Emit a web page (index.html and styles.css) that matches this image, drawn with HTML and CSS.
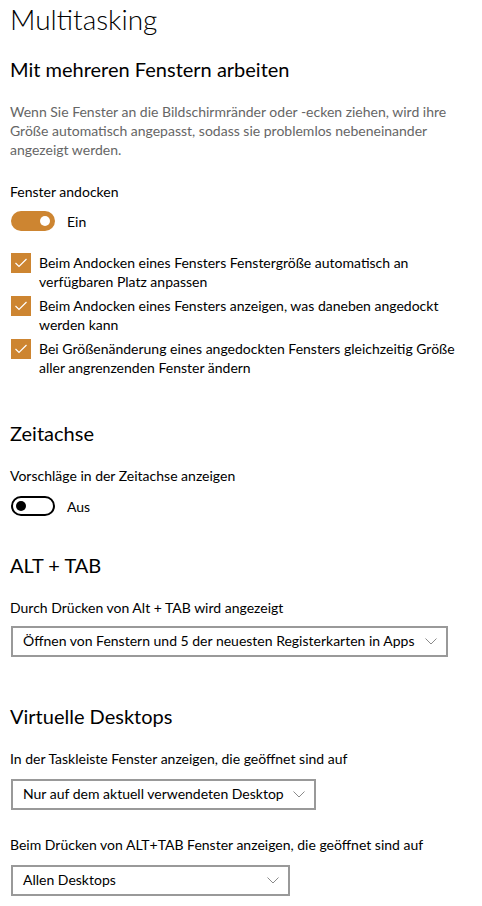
FILE: index.html
```html
<!DOCTYPE html>
<html lang="de">
<head>
    <meta charset="UTF-8">
    <meta name="viewport" content="width=device-width, initial-scale=1.0">
    <title>Multitasking</title>
    <link rel="stylesheet" href="styles.css">
</head>
<body>
    <div class="page">
        <h1 class="page-title">Multitasking</h1>

        <!-- Fenster andocken -->
        <section class="section snap">
            <h2 class="section-title">Mit mehreren Fenstern arbeiten</h2>
            <p class="description">Wenn Sie Fenster an die Bildschirmränder oder -ecken ziehen, wird ihre Größe automatisch angepasst, sodass sie problemlos nebeneinander angezeigt werden.</p>
            <div class="label snap-label">Fenster andocken</div>
            <div class="toggle-row">
                <span class="toggle on"><span class="knob"></span></span>
                <span class="toggle-text">Ein</span>
            </div>
            <ul class="checks">
                <li class="check">
                    <span class="box">
                        <svg width="20" height="20" viewBox="0 0 20 20"><polyline points="4.5,10 8,13.5 15.5,6" fill="none" stroke="#fff" stroke-width="1.2"/></svg>
                    </span>
                    <span class="check-text">Beim Andocken eines Fensters Fenstergröße automatisch an verfügbaren Platz anpassen</span>
                </li>
                <li class="check">
                    <span class="box">
                        <svg width="20" height="20" viewBox="0 0 20 20"><polyline points="4.5,10 8,13.5 15.5,6" fill="none" stroke="#fff" stroke-width="1.2"/></svg>
                    </span>
                    <span class="check-text">Beim Andocken eines Fensters anzeigen, was daneben angedockt werden kann</span>
                </li>
                <li class="check">
                    <span class="box">
                        <svg width="20" height="20" viewBox="0 0 20 20"><polyline points="4.5,10 8,13.5 15.5,6" fill="none" stroke="#fff" stroke-width="1.2"/></svg>
                    </span>
                    <span class="check-text">Bei Größenänderung eines angedockten Fensters gleichzeitig Größe aller angrenzenden Fenster ändern</span>
                </li>
            </ul>
        </section>

        <!-- Zeitachse -->
        <section class="section timeline">
            <h2 class="section-title">Zeitachse</h2>
            <div class="label">Vorschläge in der Zeitachse anzeigen</div>
            <div class="toggle-row">
                <span class="toggle off"><span class="knob"></span></span>
                <span class="toggle-text">Aus</span>
            </div>
        </section>

        <!-- ALT + TAB -->
        <section class="section alttab">
            <h2 class="section-title">ALT + TAB</h2>
            <div class="label">Durch Drücken von Alt + TAB wird angezeigt</div>
            <div class="dropdown wide">
                <span class="dropdown-text">Öffnen von Fenstern und 5 der neuesten Registerkarten in Apps</span>
                <svg class="chevron" width="12" height="7" viewBox="0 0 12 7"><polyline points="0.5,0.5 6,6 11.5,0.5" fill="none" stroke="#8a8a8a" stroke-width="1"/></svg>
            </div>
        </section>

        <!-- Virtuelle Desktops -->
        <section class="section desktops">
            <h2 class="section-title">Virtuelle Desktops</h2>
            <div class="label">In der Taskleiste Fenster anzeigen, die geöffnet sind auf</div>
            <div class="dropdown mid">
                <span class="dropdown-text">Nur auf dem aktuell verwendeten Desktop</span>
                <svg class="chevron" width="12" height="7" viewBox="0 0 12 7"><polyline points="0.5,0.5 6,6 11.5,0.5" fill="none" stroke="#8a8a8a" stroke-width="1"/></svg>
            </div>
            <div class="label second-label">Beim Drücken von ALT+TAB Fenster anzeigen, die geöffnet sind auf</div>
            <div class="dropdown narrow">
                <span class="dropdown-text">Allen Desktops</span>
                <svg class="chevron" width="12" height="7" viewBox="0 0 12 7"><polyline points="0.5,0.5 6,6 11.5,0.5" fill="none" stroke="#8a8a8a" stroke-width="1"/></svg>
            </div>
        </section>
    </div>
</body>
</html>
```
FILE: styles.css
```css
* {
    margin: 0;
    padding: 0;
    box-sizing: border-box;
}

body {
    background-color: #fff;
    color: #000;
    font-family: Lato, "Liberation Sans", sans-serif;
    font-size: 14px;
    line-height: 19px;
}

.page {
    padding: 0 11px 0 10px;
}

.page-title {
    font-size: 28px;
    font-weight: 300;
    line-height: 38px;
}

.section-title {
    font-size: 20px;
    font-weight: 400;
    line-height: 28px;
}

.snap {
    margin-top: 17px;
}

.timeline {
    margin-top: 42px;
}

.alttab {
    margin-top: 35px;
}

.desktops {
    margin-top: 45px;
}

.description {
    color: #666;
    margin-top: 19px;
}

.label {
    margin-top: 19px;
}

.snap-label {
    margin-top: 23px;
}

.second-label {
    margin-top: 25px;
}

/* Schalter */
.toggle-row {
    display: flex;
    align-items: center;
    gap: 12px;
    margin-top: 10px;
    padding-left: 1px;
}

.timeline .toggle-row {
    margin-top: 11px;
}

.toggle {
    display: flex;
    align-items: center;
    width: 44px;
    height: 20px;
    border-radius: 10px;
    padding: 0 5px;
}

.toggle .knob {
    width: 10px;
    height: 10px;
    border-radius: 50%;
}

.toggle.on {
    background-color: #cd8531;
    justify-content: flex-end;
}

.toggle.on .knob {
    background-color: #fff;
}

.toggle.off {
    border: 2px solid #000;
    padding: 0 3px;
}

.toggle.off .knob {
    background-color: #000;
}

/* Kontrollkästchen */
.checks {
    list-style: none;
    margin-top: 22px;
    display: flex;
    flex-direction: column;
    gap: 5px;
}

.check {
    display: flex;
    align-items: flex-start;
    gap: 8px;
    padding-left: 1px;
}

.box {
    flex: none;
    width: 20px;
    height: 20px;
    background-color: #cd8531;
}

.box svg {
    display: block;
}

/* Auswahlfelder */
.dropdown {
    display: flex;
    align-items: center;
    justify-content: space-between;
    margin-top: 9px;
    margin-left: 1px;
    height: 31px;
    border: 2px solid #999;
    padding: 0 9px 2px 10px;
}

.desktops .dropdown {
    margin-top: 11px;
}

.dropdown.wide {
    width: 437px;
}

.dropdown.mid {
    width: 305px;
}

.dropdown.narrow {
    width: 279px;
}

.chevron {
    flex: none;
    margin-top: 2px;
}
```
